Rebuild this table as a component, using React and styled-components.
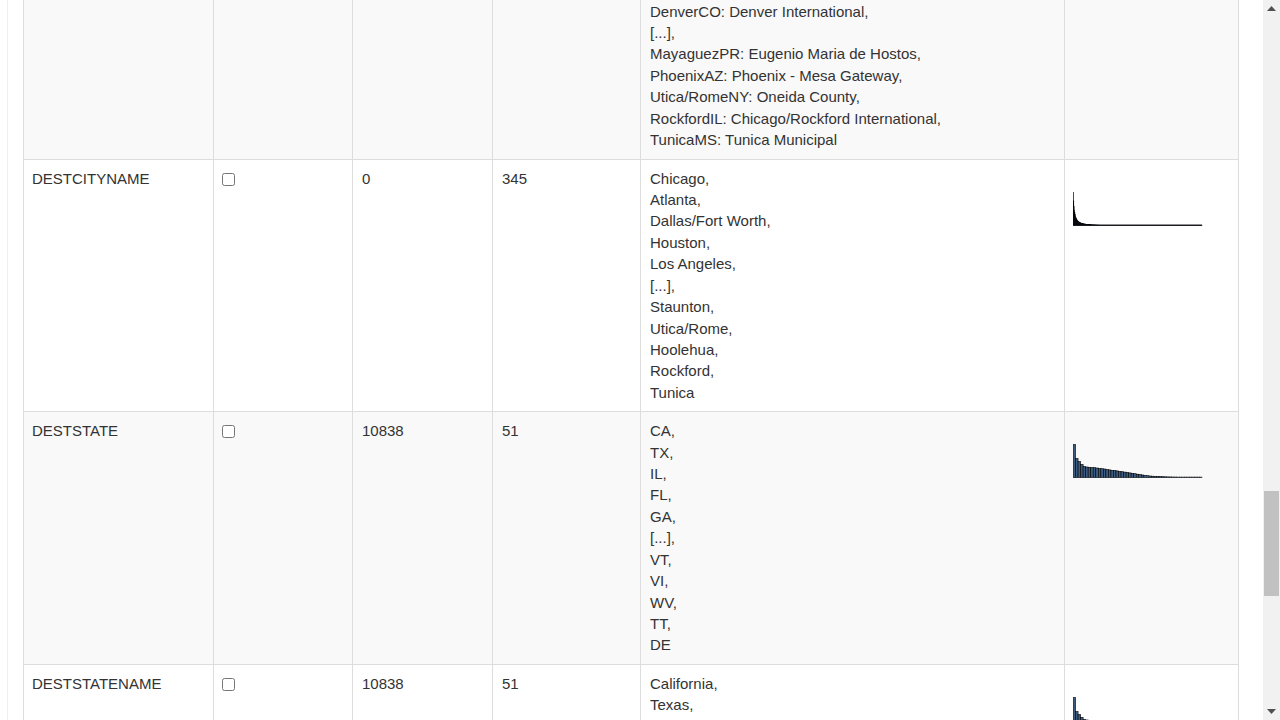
import { useLayoutEffect, useRef, useState } from "react";
import styled, { createGlobalStyle } from "styled-components";

const GlobalStyle = createGlobalStyle`
  html, body {
    margin: 0;
    height: 100%;
    overflow: hidden;
  }
  body {
    font-family: "Liberation Sans", Arial, sans-serif;
    font-size: 15px;
    line-height: 1.42857;
    color: #333;
    background: #fff;
  }
`;

// heavy-tailed counts for the histograms
const decay = (n, peak, k, p) =>
  Array.from({ length: n }, (_, i) => peak * Math.pow(1 / (1 + i / k), p));

const STATE_HIST = [
  33, 19, 16, 13, 11, 10.5, 10, 10, 9.8, 9.5, 9, 8.8, 8.5, 8, 7.6, 7.2, 7, 6.6,
  6.2, 5.8, 5.4, 5, 4.6, 4.2, 3.8, 3.3, 2.9, 2.5, 2.1, 1.8, 1.5, 1.3, 1.1, 1,
  0.9, 0.8, 0.7, 0.6, 0.55, 0.5, 0.45, 0.4, 0.35, 0.3, 0.3, 0.25, 0.25, 0.2,
  0.2, 0.15, 0.1,
];

const split = (s) => s.split("|");

const ROWS = [
  {
    name: "FLDATE",
    missing: 0,
    distinct: 31,
    values: split("2015-01-02|2015-01-05|2015-01-22|2015-01-29|2015-01-30|[...]|2015-01-25|2015-01-24|2015-01-17|2015-01-10|2015-01-31"),
    hist: decay(31, 12, 40, 0.4),
  },
  {
    name: "UNIQUECARRIER",
    missing: 0,
    distinct: 14,
    values: split("WN|DL|EV|OO|AA|[...]|US|B6|F9|HA|VX"),
    hist: decay(14, 33, 3, 1.2),
  },
  {
    name: "AIRLINEID",
    missing: 0,
    distinct: 14,
    values: split("19393|19790|20366|20304|19805|[...]|20355|20409|20436|19690|21171"),
    hist: decay(14, 33, 3, 1.2),
  },
  {
    name: "CARRIER",
    missing: 0,
    distinct: 14,
    values: split("WN|DL|EV|OO|AA|[...]|US|B6|F9|HA|VX"),
    hist: decay(14, 33, 3, 1.2),
  },
  {
    name: "TAILNUM",
    missing: 2736,
    distinct: 4385,
    values: split("N478HA|N480HA|N484HA|N488HA|N492HA|[...]|N8322X|N3734B|N7821L|N915WN|N232SW"),
    hist: decay(400, 33, 20, 1.1),
  },
  {
    name: "FLNUM",
    missing: 0,
    distinct: 6589,
    values: split("1|2|3|4|5|[...]|7435|7436|7438|7439|7440"),
    hist: decay(400, 20, 60, 1),
  },
  {
    name: "ORIGINAIRPORTID",
    missing: 0,
    distinct: 310,
    values: split("10397|13930|11298|11292|12892|[...]|14025|11097|15389|14108|15356"),
    hist: decay(310, 33, 6, 1.5),
  },
  {
    name: "ORIGIN",
    missing: 0,
    distinct: 310,
    values: split("ATL|ORD|DFW|DEN|LAX|[...]|RKS|CDV|TWF|PPG|TXK"),
    hist: decay(310, 33, 6, 1.5),
  },
  {
    name: "ORIGINCITYNAME",
    missing: 0,
    distinct: 305,
    values: split("Chicago|Atlanta|Dallas/Fort Worth|Houston|Los Angeles|[...]|Rock Springs|Cordova|Twin Falls|Pago Pago|Texarkana"),
    hist: decay(305, 33, 6, 1.5),
  },
  {
    name: "ORIGINSTATE",
    missing: 10838,
    distinct: 51,
    values: split("CA|TX|IL|FL|GA|[...]|VT|VI|WV|TT|DE"),
    hist: STATE_HIST,
  },
  {
    name: "ORIGINSTATENAME",
    missing: 10838,
    distinct: 51,
    values: split("California|Texas|Illinois|Florida|Georgia|[...]|Vermont|U.S. Virgin Islands|West Virginia|U.S. Pacific Trust Territories and Possessions|Delaware"),
    hist: STATE_HIST,
  },
  {
    name: "DESTAIRPORTID",
    missing: 0,
    distinct: 310,
    values: split("10397|13930|11298|11292|12892|[...]|13502|11003|15412|15048|14034"),
    hist: decay(310, 33, 6, 1.5),
  },
  {
    name: "DEST",
    missing: 0,
    distinct: 310,
    values: split(
      "AtlantaGA: Hartsfield-Jackson Atlanta International|ChicagoIL: Chicago O'Hare International|Dallas/Fort WorthTX: Dallas/Fort Worth International|Los AngelesCA: Los Angeles International|DenverCO: Denver International|[...]|MayaguezPR: Eugenio Maria de Hostos|PhoenixAZ: Phoenix - Mesa Gateway|Utica/RomeNY: Oneida County|RockfordIL: Chicago/Rockford International|TunicaMS: Tunica Municipal"
    ),
    hist: decay(310, 33, 6, 1.5),
  },
  {
    name: "DESTCITYNAME",
    missing: 0,
    distinct: 345,
    values: split("Chicago|Atlanta|Dallas/Fort Worth|Houston|Los Angeles|[...]|Staunton|Utica/Rome|Hoolehua|Rockford|Tunica"),
    hist: decay(345, 33, 5, 1.6),
    anchor: true,
  },
  {
    name: "DESTSTATE",
    missing: 10838,
    distinct: 51,
    values: split("CA|TX|IL|FL|GA|[...]|VT|VI|WV|TT|DE"),
    hist: STATE_HIST,
  },
  {
    name: "DESTSTATENAME",
    missing: 10838,
    distinct: 51,
    values: split("California|Texas|Illinois|Florida|Georgia|[...]|Vermont|U.S. Virgin Islands|West Virginia|U.S. Pacific Trust Territories and Possessions|Delaware"),
    hist: STATE_HIST,
  },
  {
    name: "DESTWAC",
    missing: 0,
    distinct: 52,
    values: split("91|74|41|33|34|[...]|13|4|38|5|31"),
    hist: STATE_HIST,
  },
  {
    name: "CRSDEPTIME",
    missing: 0,
    distinct: 1208,
    values: split("0600|0700|0800|0630|0900|[...]|0312|0408|0118|0237|0441"),
    hist: decay(400, 18, 80, 0.8),
  },
];

const Histogram = ({ data }) => {
  const w = 129 / data.length;
  const base = 57.5;
  return (
    <Chart width="130" height="60" viewBox="0 0 130 60">
      {data.map((h, i) => (
        <rect
          key={i}
          x={i * w}
          y={base - Math.max(h, 0.4)}
          width={w}
          height={Math.max(h, 0.4)}
          fill="#3e5c80"
          stroke="#000"
          strokeWidth="0.6"
        />
      ))}
    </Chart>
  );
};

const Arrow = ({ down }) => (
  <svg width="9" height="5" viewBox="0 0 9 5">
    <path d={down ? "M0 0 H9 L4.5 5 Z" : "M0 5 H9 L4.5 0 Z"} fill="#505050" />
  </svg>
);

const App = () => {
  const viewRef = useRef(null);
  const anchorRef = useRef(null);
  const [thumb, setThumb] = useState({ top: 471, size: 102 });

  useLayoutEffect(() => {
    const view = viewRef.current;
    const row = anchorRef.current;
    if (!view || !row) return;
    const delta =
      row.getBoundingClientRect().top - view.getBoundingClientRect().top - 159;
    view.scrollTop = view.scrollTop + delta;
    const track = view.clientHeight - 34;
    setThumb({
      top: Math.round((track * view.scrollTop) / view.scrollHeight),
      size: Math.round((track * view.clientHeight) / view.scrollHeight),
    });
  }, []);

  return (
    <>
      <GlobalStyle />
      <Frame>
        <Viewport ref={viewRef}>
          <Panel>
            <Title>Columns</Title>
            <Lead>Summary of every column in the flights table.</Lead>
            <Table>
              <colgroup>
                <Col $w={190} />
                <Col $w={139} />
                <Col $w={140} />
                <Col $w={148} />
                <Col $w={424} />
                <Col />
              </colgroup>
              <thead>
                <tr>
                  <Head>Column</Head>
                  <Head>Ignore</Head>
                  <Head>Missing</Head>
                  <Head>Distinct</Head>
                  <Head>Top values</Head>
                  <Head>Histogram</Head>
                </tr>
              </thead>
              <tbody>
                {ROWS.map((r) => (
                  <Row key={r.name} ref={r.anchor ? anchorRef : null}>
                    <Cell $first>{r.name}</Cell>
                    <Cell $first>
                      <Check type="checkbox" />
                    </Cell>
                    <Cell>{r.missing}</Cell>
                    <Cell>{r.distinct}</Cell>
                    <Cell>
                      {r.values.map((v, i) => (
                        <Value key={i}>
                          {v}
                          {i < r.values.length - 1 ? "," : ""}
                        </Value>
                      ))}
                    </Cell>
                    <Cell $first>
                      <Histogram data={r.hist} />
                    </Cell>
                  </Row>
                ))}
              </tbody>
            </Table>
          </Panel>
        </Viewport>
        <ScrollBar>
          <ScrollButton>
            <Arrow />
          </ScrollButton>
          <Track>
            <Thumb style={{ marginTop: thumb.top, height: thumb.size }} />
          </Track>
          <ScrollButton>
            <Arrow down />
          </ScrollButton>
        </ScrollBar>
      </Frame>
    </>
  );
};

const Frame = styled.div`
  display: flex;
  height: 100vh;
`;

const Viewport = styled.div`
  flex: 1;
  min-width: 0;
  overflow-y: scroll;
  scrollbar-width: none;

  &::-webkit-scrollbar {
    display: none;
  }
`;

const ScrollBar = styled.div`
  width: 17px;
  flex: none;
  display: flex;
  flex-direction: column;
  background: #f1f1f1;
`;

const ScrollButton = styled.div`
  height: 17px;
  flex: none;
  display: flex;
  align-items: center;
  justify-content: center;
`;

const Track = styled.div`
  flex: 1;
  display: flex;
  flex-direction: column;
`;

const Thumb = styled.div`
  margin-left: 1px;
  width: 15px;
  background: #c1c1c1;
`;

const Panel = styled.div`
  margin-left: 7px;
  border-left: 1px solid #f0f0f0;
  padding: 20px 24px 40px 15px;
`;

const Title = styled.h3`
  margin: 0 0 10px;
  font-size: 24px;
  font-weight: 500;
  line-height: 1.1;
`;

const Lead = styled.p`
  margin: 0 0 20px;
  color: #777;
`;

const Table = styled.table`
  width: 100%;
  table-layout: fixed;
  border-collapse: collapse;
  border: 1px solid #ddd;
  background: #fff;
`;

const Col = styled.col`
  width: ${(p) => (p.$w ? `${p.$w}px` : "auto")};
`;

const Head = styled.th`
  padding: 8px;
  text-align: left;
  font-weight: bold;
  border: 1px solid #ddd;
  border-bottom-width: 2px;
  vertical-align: bottom;
`;

const Row = styled.tr`
  &:nth-of-type(odd) {
    background: #f9f9f9;
  }
`;

const Cell = styled.td`
  padding: 8px 8px 8px ${(p) => (p.$first ? 8 : 9)}px;
  vertical-align: top;
  border: 1px solid #ddd;
  overflow: hidden;
`;

const Value = styled.div`
  white-space: nowrap;
`;

const Check = styled.input`
  margin: 5px 0 0;
  width: 13px;
  height: 13px;
  vertical-align: top;
`;

const Chart = styled.svg`
  display: block;
`;

export default App;
